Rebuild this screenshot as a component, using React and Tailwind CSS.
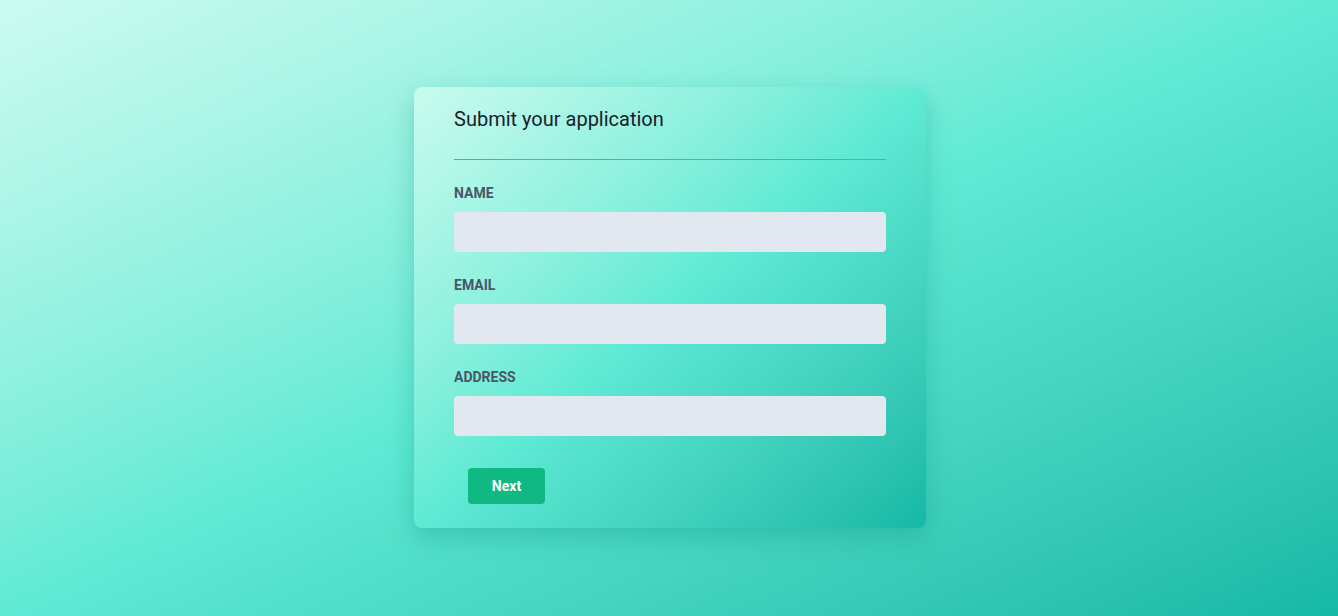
import { useState } from 'react';

const fields = ['Name', 'Email', 'Address'];

function App() {
  const [values, setValues] = useState({});

  return (
    <div className="min-h-screen w-full bg-gradient-to-br from-[#ccfbf1] via-[#5eead4] to-[#14b8a6] font-['Roboto',sans-serif] pt-[87px] pl-[2px]">
      <div className="mx-auto w-[512px] rounded-lg bg-gradient-to-br from-[#c9fbef] via-[#5eead4] to-[#14b8a6] px-10 pt-[18px] pb-6 shadow-[0_10px_25px_rgba(13,148,136,0.35)]">
        {/* Header */}
        <h2 className="text-[20px] leading-7 font-normal text-[#1a202c]">Submit your application</h2>
        <div className="mt-[26px] h-px bg-[#4fb3a3]" />

        {/* Fields */}
        <form className="mt-[23px] flex flex-col gap-[23px]" onSubmit={(e) => e.preventDefault()}>
          {fields.map((f) => (
            <div key={f} className="flex flex-col">
              <label className="text-sm leading-5 font-bold uppercase text-[#4a5568]">{f}</label>
              <input
                value={values[f] || ''}
                onChange={(e) => setValues({ ...values, [f]: e.target.value })}
                className="mt-[9px] h-10 w-full rounded bg-[#e2e8f0] px-3 text-sm outline-none"
              />
            </div>
          ))}

          <div className="mt-[9px] pl-[14px]">
            <button
              type="submit"
              className="h-9 w-[77px] rounded bg-[#10b981] text-sm font-bold text-white"
            >
              Next
            </button>
          </div>
        </form>
      </div>
    </div>
  );
}

export default App;
